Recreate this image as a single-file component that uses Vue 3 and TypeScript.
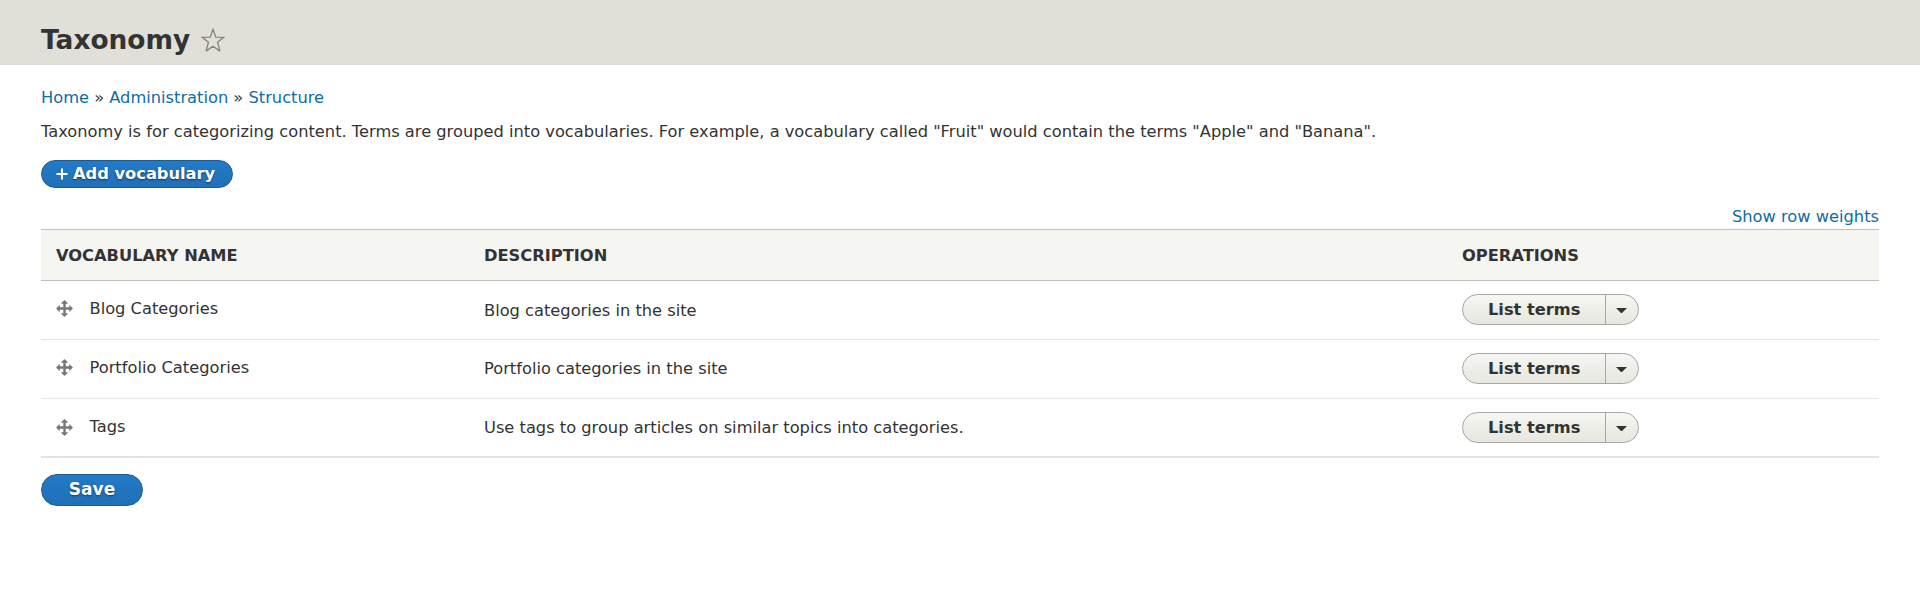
<script setup lang="ts">
interface Vocabulary {
  name: string
  description: string
}

const crumbs: string[] = ['Home', 'Administration', 'Structure']

const vocabularies: Vocabulary[] = [
  { name: 'Blog Categories', description: 'Blog categories in the site' },
  { name: 'Portfolio Categories', description: 'Portfolio categories in the site' },
  { name: 'Tags', description: 'Use tags to group articles on similar topics into categories.' },
]
</script>

<template>
  <div class="page">
    <header class="page-header">
      <h1 class="page-title">Taxonomy</h1>
      <svg class="star" viewBox="0 0 24 24" aria-hidden="true">
        <path d="M12 1.3 14.8 9.1 22.8 9.3 16.5 14.2 18.8 22.2Q18.9 23 18.2 22.6L12 18.2 5.8 22.6Q5.1 23 5.2 22.2L7.5 14.2 1.2 9.3 9.2 9.1Z" />
      </svg>
    </header>

    <main class="content">
      <nav class="breadcrumb">
        <template v-for="(crumb, i) in crumbs" :key="crumb">
          <span v-if="i > 0"> » </span><a class="link">{{ crumb }}</a>
        </template>
      </nav>
      <p class="help">Taxonomy is for categorizing content. Terms are grouped into vocabularies. For example, a vocabulary called "Fruit" would contain the terms "Apple" and "Banana".</p>
      <button class="button button-add" type="button">
        <svg class="plus" viewBox="0 0 12 12" aria-hidden="true"><path d="M6 .5v11M.5 6h11" /></svg>
        <span>Add vocabulary</span>
      </button>

      <div class="weights"><a class="link">Show row weights</a></div>

      <table class="vocabularies">
        <thead>
          <tr>
            <th class="col-name">Vocabulary name</th>
            <th class="col-description">Description</th>
            <th>Operations</th>
          </tr>
        </thead>
        <tbody>
          <tr v-for="item in vocabularies" :key="item.name">
            <td>
              <div class="name-cell">
                <svg class="handle" viewBox="0 0 16 16" aria-hidden="true">
                  <path d="M14.904 7.753l-2.373-2.372c-.291-.292-.529-.193-.529.22v1.399h-3v-3h1.398c.413 0 .512-.239.221-.53l-2.371-2.372c-.137-.136-.36-.136-.497 0l-2.372 2.372c-.292.292-.193.53.22.53h1.399v3h-3v-1.369c0-.413-.239-.511-.53-.22l-2.372 2.372c-.136.136-.136.359 0 .494l2.372 2.372c.291.292.53.192.53-.219v-1.43h3v3h-1.4c-.413 0-.511.238-.22.529l2.374 2.373c.137.137.36.137.495 0l2.373-2.373c.29-.291.19-.529-.222-.529h-1.398v-3h3v1.4c0 .412.238.511.529.219l2.373-2.371c.137-.137.137-.359 0-.495z" />
                </svg>
                <span>{{ item.name }}</span>
              </div>
            </td>
            <td>{{ item.description }}</td>
            <td>
              <div class="dropbutton">
                <span class="dropbutton-action">List terms</span>
                <span class="dropbutton-toggle"><i class="arrow"></i></span>
              </div>
            </td>
          </tr>
        </tbody>
      </table>

      <button class="button button-save" type="button">Save</button>
    </main>
  </div>
</template>

<style>
body {
  margin: 0;
  background: #fff;
}
</style>

<style scoped>
.page {
  min-height: 591px;
  color: #333;
  font-family: "DejaVu Sans", sans-serif;
  font-size: 16.26px;
  line-height: 24px;
}
.page-header {
  display: flex;
  align-items: center;
  gap: 10.5px;
  box-sizing: border-box;
  height: 65px;
  padding: 14px 41px 0;
  background: #e0e0d8;
}
.page-title {
  margin: 0;
  font-size: 26.4px;
  line-height: 32px;
  font-weight: bold;
}
.star {
  width: 24px;
  height: 24px;
  fill: none;
  stroke: #84847a;
  stroke-width: 1.3;
}
.content {
  padding: 21px 41px 0;
}
.link {
  color: #0e6ca8;
}
.breadcrumb {
  height: 24px;
}
.help {
  margin: 10px 0 0;
  white-space: nowrap;
}
.button {
  display: flex;
  align-items: center;
  box-sizing: border-box;
  border: 1px solid #1e5c90;
  border-radius: 20px;
  background: linear-gradient(#227ac6, #2070b8);
  color: #fff;
  font-family: inherit;
  font-weight: bold;
  text-shadow: 0 1px 2px rgba(0, 0, 0, 0.5);
}
.button-add {
  width: 192px;
  height: 28px;
  margin-top: 16px;
  padding: 0 0 1px 14px;
  gap: 5px;
  font-size: 16.26px;
}
.plus {
  width: 12px;
  height: 12px;
  fill: none;
  stroke: #fff;
  stroke-width: 2;
}
.weights {
  height: 24px;
  margin-top: 17px;
  text-align: right;
}
.vocabularies {
  width: 100%;
  border-collapse: separate;
  border-spacing: 0;
  table-layout: fixed;
}
.col-name {
  width: 428px;
}
.col-description {
  width: 978px;
}
th {
  box-sizing: border-box;
  height: 52px;
  padding: 1px 0 0 15px;
  border-top: 1px solid #bfbfba;
  border-bottom: 1px solid #bfbfba;
  background: #f5f5f2;
  text-align: left;
  text-transform: uppercase;
}
td {
  box-sizing: border-box;
  height: 59px;
  padding: 0 0 0 15px;
  border-bottom: 1px solid #e6e4df;
}
tbody tr:first-child td:nth-child(2) {
  padding-top: 2px;
}
tr:last-child td {
  border-bottom: 2px solid #e6e4df;
}
.name-cell {
  display: flex;
  align-items: center;
  gap: 15px;
  padding-bottom: 3px;
}
tr:last-child .name-cell {
  padding-bottom: 1px;
}
.handle {
  width: 19px;
  height: 19px;
  margin-left: -1px;
  margin-right: 0.5px;
  fill: #787878;
}
.dropbutton {
  display: flex;
  box-sizing: border-box;
  width: 177px;
  height: 31px;
  margin-bottom: 1px;
  border: 1px solid #a6a6a6;
  border-radius: 16px;
  background: linear-gradient(#f6f6f3, #e7e7df);
  font-weight: bold;
}
.dropbutton-action {
  flex: 1;
  padding-left: 25px;
  line-height: 29px;
}
.dropbutton-toggle {
  display: flex;
  align-items: center;
  justify-content: center;
  width: 33px;
  padding: 2px 2px 0 0;
  box-sizing: border-box;
  border-left: 1px solid #a6a6a6;
}
.arrow {
  width: 1px;
  border: solid transparent;
  border-width: 5px 5px 0;
  border-top-color: #333;
}
.button-save {
  width: 102px;
  height: 32px;
  margin-top: 16px;
  padding: 0 0 2px;
  justify-content: center;
  font-size: 17px;
}
</style>
